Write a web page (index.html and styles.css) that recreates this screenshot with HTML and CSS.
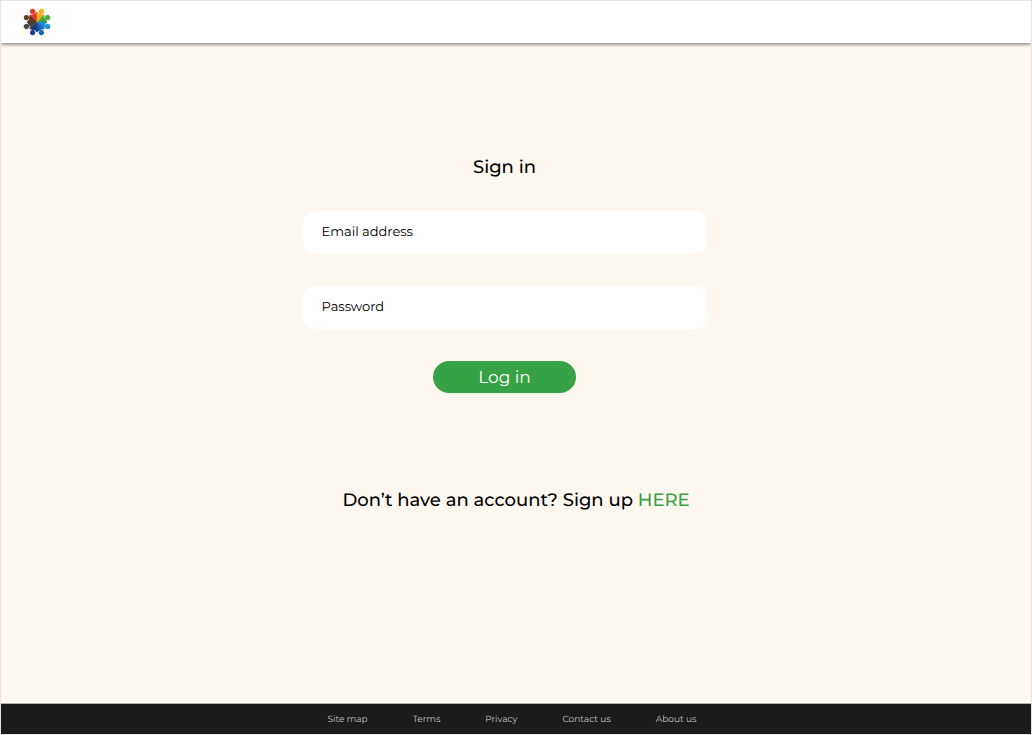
FILE: index.html
```
<!DOCTYPE html>
<html lang="en">
<head>
    <meta charset="UTF-8">
    <meta name="viewport" content="width=device-width, initial-scale=1.0">
    <link rel="stylesheet" href="styles.css">
    <title>Sign in</title>
</head>
<body>
    <header class="header">
        <a href="index.html" class="logo" aria-label="Home">
            <svg width="28" height="28" viewBox="-14 -14 28 28">
                <defs>
                    <!-- one person, turned round the centre eight times -->
                    <g id="person">
                        <path d="M0 0 L9.8 -0.4 Q10.2 0.8 9.2 1.2 Q8 2 8 3.3 Q8 4.8 7.4 5.7 Q7.8 6.8 6.8 7.2 Z"/>
                        <circle cx="10.6" cy="4.4" r="2.6"/>
                    </g>
                    <path id="fold" d="M0 0 L8 3.3 Q8 4.8 7.4 5.7 Q7.8 6.8 6.8 7.2 Z"/>
                </defs>
                <use href="#person" fill="#1a93df"/>
                <use href="#person" fill="#1763b9" transform="rotate(45)"/>
                <use href="#person" fill="#1f418c" transform="rotate(90)"/>
                <use href="#person" fill="#4a4745" transform="rotate(135)"/>
                <use href="#person" fill="#6a3e20" transform="rotate(180)"/>
                <use href="#person" fill="#e6392b" transform="rotate(225)"/>
                <use href="#person" fill="#fdae1c" transform="rotate(270)"/>
                <use href="#person" fill="#48ae3a" transform="rotate(315)"/>
                <g fill="#000" opacity="0.1">
                    <use href="#fold"/>
                    <use href="#fold" transform="rotate(45)"/>
                    <use href="#fold" transform="rotate(90)"/>
                    <use href="#fold" transform="rotate(135)"/>
                    <use href="#fold" transform="rotate(180)"/>
                    <use href="#fold" transform="rotate(315)"/>
                </g>
            </svg>
        </a>
    </header>

    <main class="main">
        <form class="login-form">
            <h1 class="title">Sign in</h1>
            <div class="field">
                <label for="email" class="field-label">Email address</label>
                <input id="email" class="field-input" type="email">
            </div>
            <div class="field">
                <label for="password" class="field-label">Password</label>
                <input id="password" class="field-input" type="password">
            </div>
            <button type="submit" class="login-button">Log in</button>
        </form>
        <p class="signup">Don’t have an account? Sign up <a href="signup.html" class="signup-link">HERE</a></p>
    </main>

    <footer class="footer">
        <a href="sitemap.html" class="footer-link">Site map</a>
        <a href="terms.html" class="footer-link">Terms</a>
        <a href="privacy.html" class="footer-link">Privacy</a>
        <a href="contact.html" class="footer-link">Contact us</a>
        <a href="about.html" class="footer-link">About us</a>
    </footer>
</body>
</html>
```
FILE: styles.css
```
* {
    box-sizing: border-box;
}
body {
    display: flex;
    flex-direction: column;
    min-height: 100vh;
    margin: 0;
    border: 1px solid #e5e5e5;
    background-color: #fff8f0;
    color: #000;
    font-family: Montserrat, Inter, sans-serif;
    text-rendering: geometricPrecision;
}
.header {
    display: flex;
    align-items: center;
    height: 42px;
    padding: 0 22px;
    background-color: #fff;
    box-shadow: 0 2px 3px rgba(0, 0, 0, 0.4);
}
.logo {
    display: flex;
}
.main {
    flex: 1;
    display: flex;
    flex-direction: column;
    align-items: center;
    padding: 112px 24px 24px;
}
.login-form {
    display: flex;
    flex-direction: column;
    align-items: center;
    gap: 32px;
    width: 100%;
    max-width: 404px;
    margin-right: 23px;
}
.title {
    margin: 0;
    font-size: 18px;
    font-weight: 500;
    line-height: 24px;
}
.field {
    display: flex;
    align-items: center;
    gap: 12px;
    width: 100%;
    height: 43px;
    padding: 0 19px;
    border-radius: 12px;
    background-color: #fff;
}
.field-label {
    font-size: 13px;
    line-height: 17px;
}
.field-input {
    flex: 1;
    min-width: 0;
    border: none;
    outline: none;
    background: none;
    font-family: inherit;
    font-size: 13px;
}
.login-button {
    width: 143px;
    height: 32px;
    border: none;
    border-radius: 16px;
    background-color: #37a146;
    color: #fff;
    font-family: inherit;
    font-size: 17px;
}
.signup {
    margin: 95px 0 0;
    font-size: 18px;
    font-weight: 500;
    line-height: 24px;
}
.signup-link {
    color: #37a146;
    text-decoration: none;
}
.footer {
    display: flex;
    justify-content: center;
    align-items: center;
    gap: 45px;
    height: 31px;
    padding-right: 8px;
    border-top: 1px solid #b5b0aa;
    background-color: #1b1b1b;
}
.footer-link {
    color: #c4c4c4;
    font-size: 9px;
    line-height: 13px;
    text-decoration: none;
}
```
